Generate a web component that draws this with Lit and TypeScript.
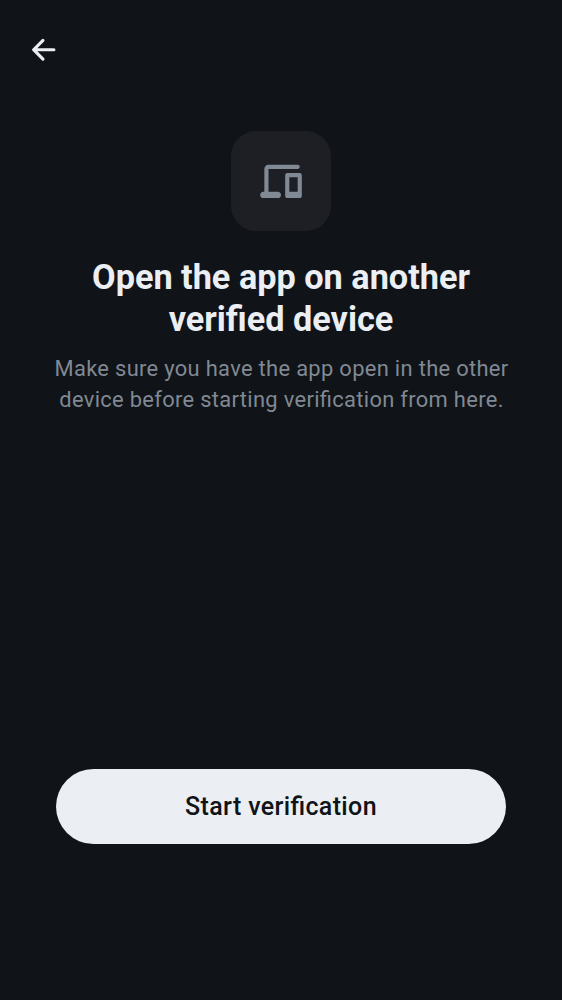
import { LitElement, html, css } from "lit";
import { customElement } from "lit/decorators.js";

@customElement("app-root")
class AppRoot extends LitElement {
  static styles = css`
    :host { display: flex; flex-direction: column; box-sizing: border-box; height: 1000px; background: #101317; font-family: Roboto, sans-serif; font-feature-settings: "liga" 1; color: #ebeef2; text-align: center; }
    .bar { height: 100px; box-sizing: border-box; padding: 31px 0 0 25px; display: flex; }
    .back { width: 37.5px; height: 37.5px; padding: 0; border: 0; background: none; color: inherit; }
    svg { display: block; fill: currentColor; }
    main { flex: 1; display: flex; flex-direction: column; align-items: center; padding-top: 31px; box-sizing: border-box; }
    .tile { width: 100px; height: 100px; border-radius: 25px; background: #1d1f24; color: #808994; display: flex; align-items: center; justify-content: center; }
    h1 { margin: 25px 0 0; font-size: 34.25px; line-height: 42px; font-weight: 700; letter-spacing: 0; }
    p { margin: 13px 0 0; padding-left: 1px; font-size: 21.9px; line-height: 31px; letter-spacing: 0.32px; color: #808994; }
    footer { padding: 0 56px 156px; }
    .start { display: block; width: 100%; height: 75px; border: 0; border-radius: 38px; background: #ebeef2; color: #101317; font: 500 25px/37px Roboto, sans-serif; font-feature-settings: "liga" 1; letter-spacing: 0.36px; }
  `;
  render() {
    return html`
      <header class="bar"><button class="back" aria-label="Back">
        <svg width="37.5" height="37.5" viewBox="0 0 24 24"><path d="m12.207 5.293.083.094a1 1 0 0 1-.083 1.32L7.914 11H18.5a1 1 0 1 1 0 2H7.914l4.293 4.293a1 1 0 1 1-1.414 1.414l-6-6a1 1 0 0 1 0-1.414l6-6a1 1 0 0 1 1.414 0Z"/></svg>
      </button></header>
      <main>
        <div class="tile"><svg width="50" height="50" viewBox="0 -0.2 24 24"><path d="M3.5 20c-.417 0-.77-.146-1.063-.438A1.447 1.447 0 0 1 2 18.5c0-.417.146-.77.438-1.063A1.446 1.446 0 0 1 3.5 17H4V6c0-.55.196-1.02.588-1.412A1.926 1.926 0 0 1 6 4h14a.97.97 0 0 1 .712.287A.968.968 0 0 1 21 5a.97.97 0 0 1-.288.713A.968.968 0 0 1 20 6H6v11h4.5c.417 0 .77.146 1.063.438.291.291.437.645.437 1.062 0 .417-.146.77-.438 1.063A1.446 1.446 0 0 1 10.5 20h-7ZM15 20a.968.968 0 0 1-.713-.288A.968.968 0 0 1 14 19V9a.97.97 0 0 1 .287-.713A.968.968 0 0 1 15 8h6c.283 0 .52.096.712.287.192.192.288.43.288.713v10c0 .283-.096.52-.288.712A.968.968 0 0 1 21 20h-6Zm1-3h4v-7h-4v7Z"/></svg></div>
        <h1>Open the app on another<br>verified device</h1>
        <p>Make sure you have the app open in the other<br>device before starting verification from here.</p>
      </main>
      <footer><button class="start">Start verification</button></footer>
    `;
  }
}
